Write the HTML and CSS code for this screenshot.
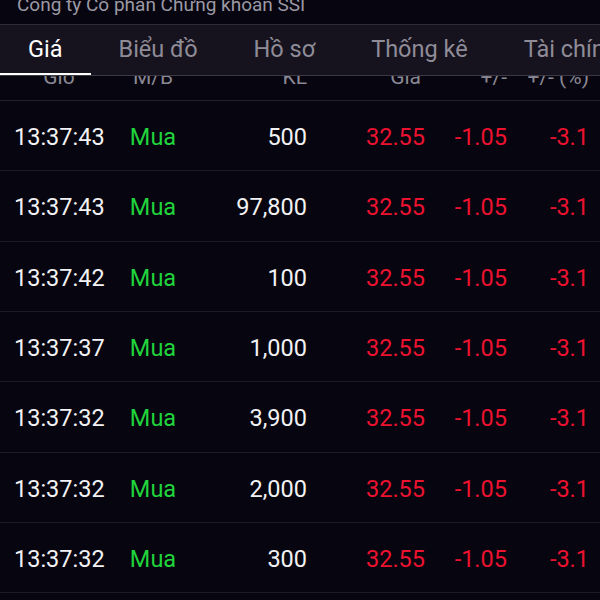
FILE: index.html
```html
<!DOCTYPE html>
<html lang="vi">
<head>
    <meta charset="UTF-8">
    <meta name="viewport" content="width=device-width, initial-scale=1.0">
    <title>SSI - Khớp lệnh</title>
    <link rel="stylesheet" href="styles.css">
</head>
<body>
    <header class="company">
        <span class="company-name">Công ty Cổ phần Chứng khoán SSI</span>
    </header>

    <nav class="tab-bar">
        <div class="tab tab-active">Giá</div>
        <div class="tab">Biểu đồ</div>
        <div class="tab">Hồ sơ</div>
        <div class="tab">Thống kê</div>
        <div class="tab">Tài chính</div>
    </nav>

    <main class="trades">
        <div class="row row-head">
            <div class="cell cell-time">Giờ</div>
            <div class="cell cell-side">M/B</div>
            <div class="cell cell-num">KL</div>
            <div class="cell cell-num">Giá</div>
            <div class="cell cell-num">+/-</div>
            <div class="cell cell-num">+/- (%)</div>
        </div>

        <div class="row">
            <div class="cell cell-time">13:37:43</div>
            <div class="cell cell-side buy">Mua</div>
            <div class="cell cell-num">500</div>
            <div class="cell cell-num down">32.55</div>
            <div class="cell cell-num down">-1.05</div>
            <div class="cell cell-num down">-3.1</div>
        </div>
        <div class="row">
            <div class="cell cell-time">13:37:43</div>
            <div class="cell cell-side buy">Mua</div>
            <div class="cell cell-num">97,800</div>
            <div class="cell cell-num down">32.55</div>
            <div class="cell cell-num down">-1.05</div>
            <div class="cell cell-num down">-3.1</div>
        </div>
        <div class="row">
            <div class="cell cell-time">13:37:42</div>
            <div class="cell cell-side buy">Mua</div>
            <div class="cell cell-num">100</div>
            <div class="cell cell-num down">32.55</div>
            <div class="cell cell-num down">-1.05</div>
            <div class="cell cell-num down">-3.1</div>
        </div>
        <div class="row">
            <div class="cell cell-time">13:37:37</div>
            <div class="cell cell-side buy">Mua</div>
            <div class="cell cell-num">1,000</div>
            <div class="cell cell-num down">32.55</div>
            <div class="cell cell-num down">-1.05</div>
            <div class="cell cell-num down">-3.1</div>
        </div>
        <div class="row">
            <div class="cell cell-time">13:37:32</div>
            <div class="cell cell-side buy">Mua</div>
            <div class="cell cell-num">3,900</div>
            <div class="cell cell-num down">32.55</div>
            <div class="cell cell-num down">-1.05</div>
            <div class="cell cell-num down">-3.1</div>
        </div>
        <div class="row">
            <div class="cell cell-time">13:37:32</div>
            <div class="cell cell-side buy">Mua</div>
            <div class="cell cell-num">2,000</div>
            <div class="cell cell-num down">32.55</div>
            <div class="cell cell-num down">-1.05</div>
            <div class="cell cell-num down">-3.1</div>
        </div>
        <div class="row">
            <div class="cell cell-time">13:37:32</div>
            <div class="cell cell-side buy">Mua</div>
            <div class="cell cell-num">300</div>
            <div class="cell cell-num down">32.55</div>
            <div class="cell cell-num down">-1.05</div>
            <div class="cell cell-num down">-3.1</div>
        </div>
    </main>
</body>
</html>
```

FILE: styles.css
```css
body {
    margin: 0;
    background-color: #07050f;
    color: #f2f2f4;
    font-family: Roboto, "Noto Sans", sans-serif;
    overflow: hidden;
}

/* 회사 이름 (위쪽이 잘려 보임) */
.company {
    height: 24px;
    overflow: hidden;
    padding-left: 17px;
}

.company-name {
    display: block;
    margin-top: -5px;
    font-size: 19px;
    line-height: 20px;
    color: #9b99a4;
    white-space: nowrap;
}

/* 탭 */
.tab-bar {
    position: relative;
    z-index: 1;
    display: flex;
    height: 50px;
    background-color: #16131e;
    border-top: 1px solid #2e2c37;
    border-bottom: 1px solid #3b3945;
    overflow: hidden;
    white-space: nowrap;
}

.tab {
    display: flex;
    align-items: center;
    padding: 0 28px 3px;
    font-size: 23.5px;
    color: #8f8c98;
    flex-shrink: 0;
}

.tab-active {
    color: #ffffff;
    box-shadow: inset 0 -2px 0 #ffffff;
}

/* 체결 목록 */
.row {
    display: grid;
    grid-template-columns: 100px 78px 115px 118px 82px 82px;
    align-items: center;
    padding-left: 14px;
    padding-top: 3px;
    height: 70.33px;
    box-sizing: border-box;
    border-bottom: 1px solid #1d1b27;
    font-size: 23.5px;
}

.row-head {
    height: 48px;
    margin-top: -23px;
    padding-top: 1px;
    font-size: 21px;
    color: #8a8893;
    border-bottom-color: #24222e;
}

.cell {
    white-space: nowrap;
}

.cell-side { text-align: center; }
.cell-num { text-align: right; }

.row-head .cell-time {
    text-align: center;
    padding-right: 10px;
}

.row-head .cell-num:nth-child(4) { padding-right: 4px; }

.buy { color: #20d43c; }
.down { color: #ec1230; }
```
